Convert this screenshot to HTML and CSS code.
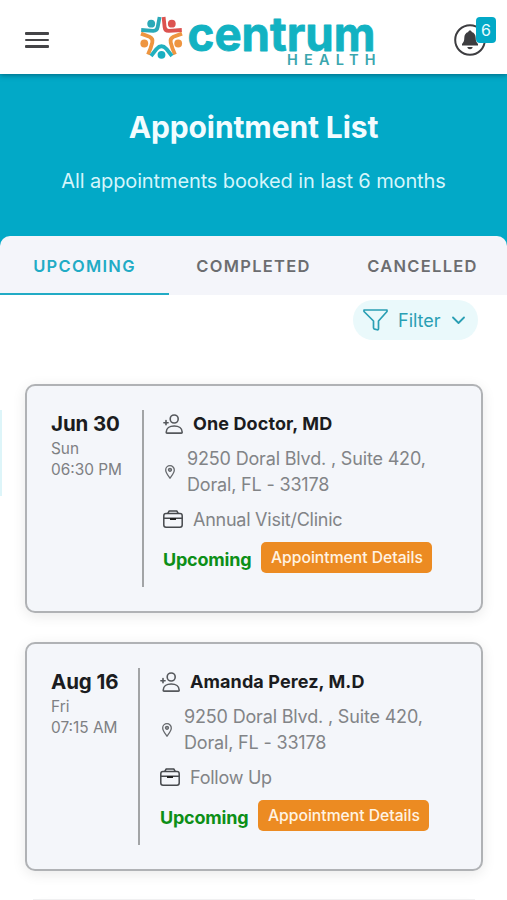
FILE: index.html
```html
<!DOCTYPE html>
<html lang="en">
<head>
<meta charset="utf-8">
<meta name="viewport" content="width=device-width, initial-scale=1">
<title>Appointment List</title>
<link rel="stylesheet" href="styles.css">
</head>
<body>
<svg class="sprite" aria-hidden="true">
  <symbol id="doctor" viewBox="0 0 20 20">
    <g fill="none" stroke="#55585c" stroke-width="1.600" stroke-linejoin="round" stroke-linecap="round">
      <circle cx="11.200" cy="5" r="4"/>
      <path d="M3.200 18.200C3.200 14.400 6.600 12 11.200 12s8 2.400 8 6.200c0 .6-.3.9-.8.900H4c-.5 0-.8-.3-.8-.9Z"/>
      <path d="M.9 8.700h4.200M3 6.600v4.200"/>
    </g>
  </symbol>
  <symbol id="pin" viewBox="0 0 10 14">
    <g fill="none" stroke="#66696d" stroke-width="1.300">
      <path d="M5 13.200C3.500 11 .7 7.800.7 5a4.300 4.300 0 0 1 8.600 0c0 2.800-2.800 6-4.300 8.200Z"/>
      <circle cx="5" cy="4.800" r="1.500" fill="#9a9da1"/>
    </g>
  </symbol>
  <symbol id="case" viewBox="0 0 20 18">
    <g fill="none" stroke="#46494d" stroke-width="1.500" stroke-linejoin="round">
      <rect x=".8" y="3.500" width="18.400" height="13.700" rx="2.200"/>
      <path d="M4.800 3.300 6.200 1h7.600l1.400 2.300M.8 8.300h18.400"/>
      <path d="M7 9h6" stroke="#222" stroke-width="2"/>
    </g>
  </symbol>
</svg>

<header class="topbar">
  <button class="menu" aria-label="Menu"><i></i><i></i><i></i></button>
  <svg class="logo" width="238" height="54" viewBox="0 0 238 54" role="img" aria-label="Centrum Health">
    <g fill="none" stroke-width="3.800" stroke-linejoin="round">
      <path stroke="#2aa9b8" d="M20.600 2 18.700 12Q18 16 14 15.800L2.200 15"/>
      <path stroke="#dc5350" d="M24.600 2 25.600 12Q26 16 30 15.800L42.800 15"/>
      <path stroke="#ee9540" d="M2 18.600 10.500 21.800Q14.300 23.500 13.300 27.500 12 33 9 39.500"/>
      <path stroke="#ee9540" d="M43 18.600 34.500 21.800Q30.700 23.500 31.700 27.500 33 33 36 39.500"/>
      <path stroke="#22b0bf" d="M12 41 17.500 34Q22.500 28.500 27.500 34L33 41"/>
    </g>
    <circle cx="12.200" cy="8.700" r="3.900" fill="#2aa9b8"/>
    <circle cx="32.800" cy="8.700" r="3.900" fill="#dc5350"/>
    <circle cx="5.300" cy="28.500" r="3.900" fill="#ee9540"/>
    <circle cx="39.200" cy="28.500" r="3.900" fill="#ee9540"/>
    <circle cx="22.500" cy="39.800" r="3.900" fill="#18afc1"/>
    <text class="brand" x="48.500" y="36" textLength="188" lengthAdjust="spacingAndGlyphs">centrum</text>
    <text class="brand-sub" x="148" y="50" textLength="88.500">HEALTH</text>
  </svg>
  <div class="bell">
    <svg width="32" height="32" viewBox="0 0 32 32">
      <circle cx="16" cy="16" r="14.800" fill="#fff" stroke="#3d3d40" stroke-width="2"/>
      <path fill="#3d3d40" d="M16 6.500c1 0 1.600.6 1.700 1.400 2.700.8 4 3 4 5.900 0 3.500.8 4.700 2.300 6.200v1.500H8V20c1.500-1.500 2.300-2.700 2.300-6.200 0-2.900 1.300-5.100 4-5.900.1-.8.700-1.400 1.700-1.400Z"/>
      <path fill="#3d3d40" d="M13.300 23h5.400c-.3 1.500-1.300 2.200-2.700 2.200s-2.400-.7-2.700-2.200Z"/>
    </svg>
    <span class="badge">6</span>
  </div>
</header>

<section class="hero">
  <h1>Appointment List</h1>
  <p>All appointments booked in last 6 months</p>
</section>

<nav class="tabs">
  <a class="tab active">UPCOMING</a>
  <a class="tab">COMPLETED</a>
  <a class="tab">CANCELLED</a>
</nav>

<main>
  <button class="filter">
    <svg width="25" height="22" viewBox="0 0 25 22" fill="none" stroke="#2a9fb4" stroke-width="1.700" stroke-linejoin="round"><path d="M1 1h23v1.500L15.500 12v7.500c0 1-.5 1.500-1.300 1.300l-2.500-.6c-.8-.2-1.200-.6-1.200-1.500V12L1 2.500Z"/></svg>
    <span>Filter</span>
    <svg width="13" height="9" viewBox="0 0 13 9" fill="none" stroke="#2a9fb4" stroke-width="1.800" stroke-linecap="round" stroke-linejoin="round"><path d="m1 1.500 5.500 5.500L12 1.500"/></svg>
  </button>

  <article class="card">
    <div class="when">
      <h2>Jun 30</h2>
      <p>Sun</p>
      <p>06:30 PM</p>
    </div>
    <div class="info">
      <div class="row name"><svg width="20" height="20"><use href="#doctor"/></svg><h3>One Doctor, MD</h3></div>
      <div class="row place"><svg width="10" height="14"><use href="#pin"/></svg><p>9250 Doral Blvd. , Suite 420,<br>Doral, FL - 33178</p></div>
      <div class="row visit"><svg width="20" height="18"><use href="#case"/></svg><p>Annual Visit/Clinic</p></div>
      <div class="actions"><span class="status">Upcoming</span><button class="details">Appointment Details</button></div>
    </div>
  </article>

  <article class="card">
    <div class="when second">
      <h2>Aug 16</h2>
      <p>Fri</p>
      <p>07:15 AM</p>
    </div>
    <div class="info">
      <div class="row name"><svg width="20" height="20"><use href="#doctor"/></svg><h3>Amanda Perez, M.D</h3></div>
      <div class="row place"><svg width="10" height="14"><use href="#pin"/></svg><p>9250 Doral Blvd. , Suite 420,<br>Doral, FL - 33178</p></div>
      <div class="row visit"><svg width="20" height="18"><use href="#case"/></svg><p>Follow Up</p></div>
      <div class="actions"><span class="status">Upcoming</span><button class="details">Appointment Details</button></div>
    </div>
  </article>

  <article class="card peek"></article>
  <span class="edge"></span>
</main>
</body>
</html>
```
FILE: styles.css
```css
* { box-sizing: border-box; margin: 0; padding: 0; }
body {
  display: flex;
  flex-direction: column;
  height: 900px;
  background: #fff;
  color: #1b1c20;
  font-family: Inter, "Liberation Sans", sans-serif;
  white-space: nowrap;
}
button { border: 0; font: inherit; }
svg { flex: none; display: block; }
.sprite { position: absolute; width: 0; height: 0; }

.topbar {
  position: relative;
  z-index: 1;
  display: flex;
  flex: none;
  justify-content: space-between;
  align-items: center;
  height: 74px;
  padding: 6px 21px 0 25px;
  background: #fff;
  box-shadow: 0 1px 5px rgba(0, 40, 60, .5);
}
.menu { display: flex; flex-direction: column; gap: 4px; width: 24px; background: none; }
.menu i { height: 2.500px; border-radius: 1px; background: #444447; }
.logo { margin: 4px 0 0 12px; overflow: visible; }
.brand {
  font: 700 47px Inter, sans-serif;
  fill: #12b2c2;
  stroke: #12b2c2;
  stroke-width: .8px;
  stroke-linejoin: round;
}
.brand-sub { font: 600 14.500px Inter, sans-serif; fill: #3aa6ae; }
.bell { position: relative; width: 32px; }
.badge {
  position: absolute;
  left: 22px;
  top: -7px;
  width: 20px;
  height: 26px;
  border-radius: 4px;
  background: #02a9c7;
  color: #e8fbff;
  font-size: 16px;
  line-height: 26px;
  text-align: center;
}

.hero {
  flex: none;
  height: 182px;
  margin-bottom: -20px;
  padding-top: 34px;
  background: #02a9c7;
  text-align: center;
}
.hero h1 { color: #f2fcff; font-size: 30px; line-height: 38px; font-weight: 700; letter-spacing: -.1px; }
.hero p { margin-top: 22px; color: #d5f5fb; font-size: 20px; line-height: 26px; letter-spacing: -.12px; }

.tabs {
  display: grid;
  flex: none;
  grid-template-columns: repeat(3, 1fr);
  height: 59px;
  border-radius: 10px 10px 0 0;
  background: #f4f5fa;
}
.tab {
  height: 59px;
  color: #6c6d70;
  font-size: 16.500px;
  font-weight: 600;
  line-height: 61px;
  letter-spacing: 1.300px;
  text-align: center;
}
.tab.active { color: #21abc5; border-bottom: 2px solid #21abc5; }

main {
  position: relative;
  display: flex;
  flex: 1;
  min-height: 0;
  flex-direction: column;
  gap: 29px;
  padding: 5px 24px 0 25px;
  overflow: hidden;
}
.filter {
  align-self: flex-end;
  display: flex;
  flex: none;
  align-items: center;
  gap: 10px;
  width: 125px;
  height: 40px;
  margin: 0 5px 15px 0;
  padding: 0 12px 0 10px;
  border-radius: 20px;
  background: #eaf9fb;
  color: #2a9fb4;
  font-size: 18px;
}
.filter svg:last-child { margin-left: 1px; }

.card {
  display: flex;
  flex: none;
  height: 229px;
  padding: 24px;
  border: 2px solid #b0b2b5;
  border-radius: 10px;
  background: #f4f6fa;
  box-shadow: 0 3px 14px rgba(0, 0, 0, .09);
}
.card.peek { height: 1px; margin: -1px 8px 0; padding: 0; border: 0; border-radius: 0; background: #f0f0f1; }
.when { width: 93px; height: 177px; border-right: 2px solid #a2a4a6; color: #7e8083; }
.when.second { width: 89px; }
.when h2 { margin-bottom: 1px; color: #1b1c20; font-size: 20.500px; line-height: 28px; font-weight: 700; letter-spacing: -.1px; }
.when p { font-size: 15.400px; line-height: 20.500px; }
.info { padding-left: 19px; }
.second + .info { padding-left: 20px; }
.row { display: flex; align-items: center; color: #828487; font-size: 18px; }
.name { gap: 10px; height: 27px; }
.name h3 { color: #1b1c20; font-size: 18px; font-weight: 700; letter-spacing: .1px; }
.place { gap: 12px; margin: 9px 0 0 2px; line-height: 25.500px; letter-spacing: -.17px; }
.visit { gap: 10px; height: 26px; margin-top: 9px; letter-spacing: -.25px; }
.actions { display: flex; gap: 10px; margin-top: 10px; }
.status { color: #0c8f17; font-size: 18px; font-weight: 700; line-height: 36px; letter-spacing: -.2px; }
.details {
  width: 171px;
  height: 31px;
  border-radius: 5px;
  background: #ec8b22;
  color: #fff3e2;
  font-size: 15.700px;
  font-weight: 500;
  line-height: 31px;
}
.edge { position: absolute; left: 0; top: 115px; width: 2px; height: 86px; background: #ddf5f9; }
```
